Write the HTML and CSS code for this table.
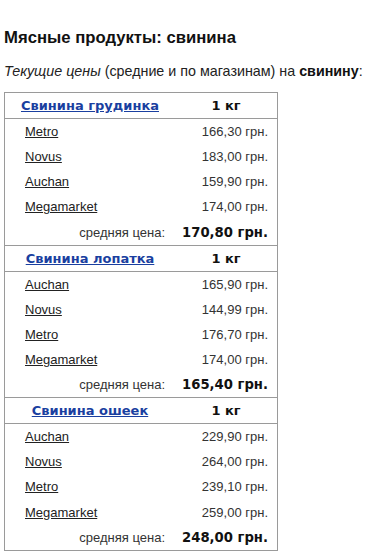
FILE: index.html
```html
<!DOCTYPE html>
<html lang="ru">
<head>
<meta charset="utf-8">
<link rel="stylesheet" href="styles.css">
</head>
<body>
<h1 class="title">Мясные продукты: свинина</h1>
<p class="lead"><em>Текущие цены</em> (средние и по магазинам) на <strong>свинину</strong>:</p>
<table class="prices">
  <tbody>
    <tr class="head"><th class="name"><a href="#">Свинина грудинка</a></th><th class="unit">1 кг</th></tr>
    <tr><td class="store"><a href="#">Metro</a></td><td class="price">166,30 грн.</td></tr>
    <tr><td class="store"><a href="#">Novus</a></td><td class="price">183,00 грн.</td></tr>
    <tr><td class="store"><a href="#">Auchan</a></td><td class="price">159,90 грн.</td></tr>
    <tr><td class="store"><a href="#">Megamarket</a></td><td class="price">174,00 грн.</td></tr>
    <tr class="avg"><td class="avg-label">средняя цена:</td><td class="avg-value">170,80 грн.</td></tr>
  </tbody>
  <tbody>
    <tr class="head"><th class="name"><a href="#">Свинина лопатка</a></th><th class="unit">1 кг</th></tr>
    <tr><td class="store"><a href="#">Auchan</a></td><td class="price">165,90 грн.</td></tr>
    <tr><td class="store"><a href="#">Novus</a></td><td class="price">144,99 грн.</td></tr>
    <tr><td class="store"><a href="#">Metro</a></td><td class="price">176,70 грн.</td></tr>
    <tr><td class="store"><a href="#">Megamarket</a></td><td class="price">174,00 грн.</td></tr>
    <tr class="avg"><td class="avg-label">средняя цена:</td><td class="avg-value">165,40 грн.</td></tr>
  </tbody>
  <tbody>
    <tr class="head"><th class="name"><a href="#">Свинина ошеек</a></th><th class="unit">1 кг</th></tr>
    <tr><td class="store"><a href="#">Auchan</a></td><td class="price">229,90 грн.</td></tr>
    <tr><td class="store"><a href="#">Novus</a></td><td class="price">264,00 грн.</td></tr>
    <tr><td class="store"><a href="#">Metro</a></td><td class="price">239,10 грн.</td></tr>
    <tr><td class="store"><a href="#">Megamarket</a></td><td class="price">259,00 грн.</td></tr>
    <tr class="avg"><td class="avg-label">средняя цена:</td><td class="avg-value">248,00 грн.</td></tr>
  </tbody>
</table>
</body>
</html>
```
FILE: styles.css
```css
html, body {
  margin: 0;
  padding: 0;
  background: #fff;
}
body {
  padding: 0 4px;
  font-family: "Liberation Sans", Arial, sans-serif;
  color: #222;
}
.title {
  margin: 0;
  padding-top: 28px;
  font-size: 16.7px;
  line-height: 20px;
  font-weight: bold;
  color: #111;
}
.lead {
  margin: 14px 0 0;
  font-size: 14.3px;
  line-height: 18px;
  color: #222;
}
.lead strong {
  color: #111;
}
.prices {
  margin-top: 12px;
  border-collapse: collapse;
  border: 1px solid #9a9a9a;
  width: 274px;
  table-layout: fixed;
}
.prices td, .prices th {
  padding: 0;
  height: 25.1px;
  vertical-align: middle;
}
.prices .name { width: 170px; }
.head th {
  border-top: 1px solid #9a9a9a;
  border-bottom: 1px solid #9a9a9a;
  font-family: "DejaVu Sans", Verdana, sans-serif;
  font-weight: bold;
  font-size: 13px;
  color: #111;
  text-align: center;
}
.head a {
  color: #1a3fa0;
}
.store {
  padding-left: 20px !important;
  font-size: 13px;
}
.store a {
  color: #222;
}
.price {
  text-align: right;
  padding-right: 9px !important;
  font-size: 13px;
  color: #333;
}
.avg-label {
  text-align: right;
  padding-right: 10px !important;
  font-size: 13px;
  color: #333;
}
.avg-value {
  text-align: right;
  padding-right: 9px !important;
  font-family: "DejaVu Sans", Verdana, sans-serif;
  font-weight: bold;
  font-size: 13.2px;
  color: #111;
}
```
